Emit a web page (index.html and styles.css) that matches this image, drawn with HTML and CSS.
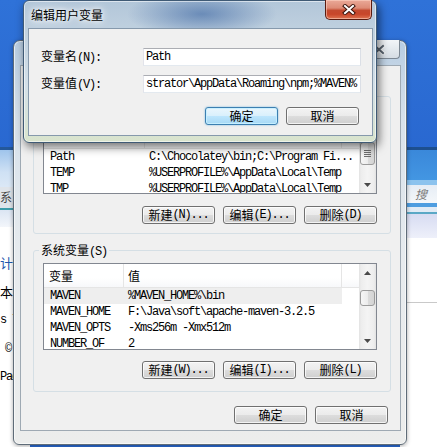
FILE: index.html
```html
<!DOCTYPE html>
<html lang="zh-CN">
<head>
<meta charset="utf-8">
<title>编辑用户变量</title>
<link rel="stylesheet" href="styles.css">
</head>
<body>
<div class="desk">
  <div class="bgwin bg-left">
    <div class="bl-line"></div>
    <div class="bl-bar"></div>
    <div class="bl-tool"><span class="z">系</span></div>
    <div class="bl-teal"></div>
    <div class="bl-lav"></div>
    <div class="bl-body">
      <div class="bl-t bl-blue"><span class="z">计</span></div>
      <div class="bl-t"><span class="z">本</span></div>
      <div class="bl-t">s 7</div>
      <div class="bl-t bl-copy">©</div>
      <div class="bl-t">Pac</div>
    </div>
  </div>

  <div class="bgwin bg-right">
    <div class="br-line"></div>
    <div class="br-bar"></div>
    <div class="br-hl"></div>
    <div class="br-search"><span class="z">搜索</span></div>
    <div class="br-blue"></div>
    <div class="br-light"></div>
    <div class="br-teal"></div>
    <div class="br-lav"></div>
    <div class="br-body"><div class="br-rule"></div></div>
  </div>

  <div class="win envwin">
    <div class="env-title">
      <div class="env-close">
        <svg width="14" height="11" viewBox="0 0 14 11"><path d="M3 2 L11 9 M11 2 L3 9" stroke="#f4f6f8" stroke-width="4" stroke-linecap="square"/><path d="M3 2 L11 9 M11 2 L3 9" stroke="#5a6470" stroke-width="2" stroke-linecap="square"/></svg>
      </div>
    </div>
    <div class="env-client">
      <fieldset class="grp grp-user">
        <legend>Administrator <span class="z">的用户变量</span>(U)</legend>
        <div class="lv lv-user">
          <div class="lv-main">
            <div class="lv-head"><div class="c1"><span class="z">变量</span></div><div class="c2"><span class="z">值</span></div><div class="c3"></div></div>
            <div class="lv-row"><div class="c1">Path</div><div class="c2">C:\Chocolatey\bin;C:\Program Fi...</div></div>
            <div class="lv-row"><div class="c1">TEMP</div><div class="c2">%USERPROFILE%\AppData\Local\Temp</div></div>
            <div class="lv-row"><div class="c1">TMP</div><div class="c2">%USERPROFILE%\AppData\Local\Temp</div></div>
          </div>
          <div class="sb">
            <div class="sb-btn"><svg width="7" height="4" viewBox="0 0 7 4"><polygon points="0,4 3.5,0 7,4" fill="#4a4a4a"/></svg></div>
            <div class="sb-thumb thumb-user"><svg width="7" height="7" viewBox="0 0 7 7"><path d="M0 0.5H7M0 2.5H7M0 4.5H7M0 6.5H7" stroke="#6e6e6e" stroke-width="1"/></svg></div>
            <div class="sb-track"></div>
            <div class="sb-btn"><svg width="7" height="4" viewBox="0 0 7 4"><polygon points="0,0 7,0 3.5,4" fill="#4a4a4a"/></svg></div>
          </div>
        </div>
        <div class="btnrow btnrow-user">
          <button class="btn"><span class="z">新建</span>(N)...</button>
          <button class="btn"><span class="z">编辑</span>(E)...</button>
          <button class="btn"><span class="z">删除</span>(D)</button>
        </div>
      </fieldset>

      <fieldset class="grp grp-sys">
        <legend><span class="z">系统变量</span>(S)</legend>
        <div class="lv lv-sys">
          <div class="lv-main">
            <div class="lv-head"><div class="c1"><span class="z">变量</span></div><div class="c2"><span class="z">值</span></div><div class="c3"></div></div>
            <div class="lv-row sel"><div class="c1">MAVEN</div><div class="c2">%MAVEN_HOME%\bin</div></div>
            <div class="lv-row"><div class="c1">MAVEN_HOME</div><div class="c2">F:\Java\soft\apache-maven-3.2.5</div></div>
            <div class="lv-row"><div class="c1">MAVEN_OPTS</div><div class="c2">-Xms256m -Xmx512m</div></div>
            <div class="lv-row"><div class="c1">NUMBER_OF</div><div class="c2">2</div></div>
          </div>
          <div class="sb">
            <div class="sb-btn"><svg width="7" height="4" viewBox="0 0 7 4"><polygon points="0,4 3.5,0 7,4" fill="#4a4a4a"/></svg></div>
            <div class="sb-gap"></div>
            <div class="sb-thumb thumb-sys"></div>
            <div class="sb-track"></div>
            <div class="sb-btn"><svg width="7" height="4" viewBox="0 0 7 4"><polygon points="0,0 7,0 3.5,4" fill="#4a4a4a"/></svg></div>
          </div>
        </div>
        <div class="btnrow btnrow-sys">
          <button class="btn"><span class="z">新建</span>(W)...</button>
          <button class="btn"><span class="z">编辑</span>(I)...</button>
          <button class="btn"><span class="z">删除</span>(L)</button>
        </div>
      </fieldset>

      <div class="okrow">
        <button class="btn"><span class="z">确定</span></button>
        <button class="btn"><span class="z">取消</span></button>
      </div>
    </div>
  </div>

  <div class="win editwin">
    <div class="edit-title">
      <span class="ttl z">编辑用户变量</span>
      <div class="close">
        <svg width="14" height="11" viewBox="0 0 14 11"><path d="M3 2 L11 9 M11 2 L3 9" stroke="#3c140c" stroke-width="4" stroke-linecap="square"/><path d="M3 2 L11 9 M11 2 L3 9" stroke="#ffffff" stroke-width="2" stroke-linecap="square"/></svg>
      </div>
    </div>
    <div class="edit-client">
      <div class="frow">
        <div class="flabel"><span class="z">变量名</span>(N):</div>
        <div class="field">Path</div>
      </div>
      <div class="frow frow2">
        <div class="flabel"><span class="z">变量值</span>(V):</div>
        <div class="field">strator\AppData\Roaming\npm;%MAVEN%</div>
      </div>
      <div class="edit-btns">
        <button class="btn def"><span class="z">确定</span></button>
        <button class="btn"><span class="z">取消</span></button>
      </div>
    </div>
  </div>
</div>
</body>
</html>
```

FILE: styles.css
```css
* { box-sizing: border-box; }
html, body { margin: 0; padding: 0; }
body {
  width: 437px;
  height: 447px;
  overflow: hidden;
  font-family: "Liberation Mono", "Noto Sans CJK SC", monospace;
  font-size: 12px;
  letter-spacing: -1.2px;
  line-height: 16px;
  color: #000;
}
.z {
  font-family: "Noto Sans CJK SC", sans-serif;
  font-size: 12px;
  letter-spacing: 0;
}
.desk {
  position: relative;
  width: 437px;
  height: 447px;
  overflow: hidden;
  background: linear-gradient(180deg, #2f72d8 0%, #2866cf 40%, #2a6ad2 100%);
}

/* background windows */
.bgwin { position: absolute; display: flex; flex-direction: column; overflow: hidden; }
.bg-left { left: 0; top: 147px; width: 30px; bottom: 0; background: #fff; }
.bl-line { height: 3px; background: #24589a; }
.bl-bar { height: 37px; background: linear-gradient(180deg, #9fc4ec 0%, #cfe1f4 60%, #dbe8f6 100%); }
.bl-tool { height: 21px; background: #dfe4ea; color: #444; line-height: 20px; }
.bl-teal { height: 2px; background: #3f9ca9; }
.bl-lav { height: 17px; background: linear-gradient(180deg, #dbe5f3, #f3f6fb); }
.bl-body { flex: 1; background: #fff; padding-top: 22px; }
.bl-t { height: 28.5px; line-height: 28.5px; white-space: nowrap; }
.bl-t .z { font-size: 13px; }
.bl-blue { color: #1f57ad; }
.bl-copy { padding-left: 5px; }

.bg-right { left: 400px; right: 0; top: 147px; bottom: 0; background: #fff; }
.br-line { height: 3px; background: #1d4f8f; }
.br-bar { height: 30px; background: linear-gradient(180deg, #3a88da, #4396e2); }
.br-hl { height: 5px; background: #8cc3ee; }
.br-search {
  height: 18px;
  background: linear-gradient(180deg, #e6edf5, #f4f7fa);
  padding-left: 15px;
  line-height: 18px;
  color: #7c7c7c;
  font-style: italic;
}
.br-blue { height: 4px; background: #4e9de0; }
.br-light { height: 5px; background: #e1ebf5; }
.br-teal { height: 2px; background: #5aa8c6; }
.br-lav { height: 24px; background: linear-gradient(180deg, #d7dcf2, #eef0fa); }
.br-body { flex: 1; background: #fff; padding-top: 64px; }
.br-rule { height: 1px; background: #c9c9c9; }

/* windows */
.win { position: absolute; display: flex; flex-direction: column; }

.envwin {
  left: 13px;
  top: 40px;
  width: 394px;
  height: 405px;
  border: 1px solid #5f6c78;
  border-radius: 7px 7px 6px 6px;
  padding: 0 6px 14px 7px;
  background: linear-gradient(180deg, #b8cde2 0%, #d8e2eb 20%, #e7ebee 55%, #ecedec 100%);
  box-shadow: inset 0 0 0 1px rgba(255, 255, 255, 0.6), 0 1px 4px rgba(0, 0, 0, 0.35);
}
.env-title {
  height: 25px;
  flex: none;
  display: flex;
  justify-content: flex-end;
  align-items: flex-start;
}
.env-close {
  width: 43px;
  height: 19px;
  margin-top: -1px;
  border: 1px solid #7d8894;
  border-top: none;
  border-radius: 0 0 4px 4px;
  background: linear-gradient(180deg, #f2f5f8, #d6dde4);
  display: flex;
  align-items: center;
  justify-content: center;
}
.env-client {
  flex: 1;
  background: #f0f0f0;
  box-shadow: 0 0 0 1px #9ea9b3;
  display: flex;
  flex-direction: column;
}

/* group boxes */
.grp {
  margin: 0 9px 0 12px;
  padding: 0 13px 9px 9px;
  border: 1px solid #d5dfe5;
  border-radius: 3px;
  min-width: 0;
}
.grp legend {
  padding: 0 2px;
  margin-left: -4px;
  height: 16px;
  line-height: 16px;
}
.grp-user { margin-top: 22px; padding-top: 20px; }
.grp-sys { margin-top: 8px; padding-top: 5px; padding-bottom: 12px; }

/* list views */
.lv {
  display: flex;
  background: #fff;
  border: 1px solid #828790;
  overflow: hidden;
}
.lv-user { height: 70px; --c1: 101px; }
.lv-sys { height: 87px; --c1: 80px; }
.lv-main { flex: 1; min-width: 0; overflow: hidden; }
.lv-head {
  display: flex;
  height: 24px;
  border-bottom: 1px solid #e5e5e5;
  background: linear-gradient(180deg, #ffffff, #ffffff 60%, #f7f8fa 100%);
}
.lv-head > div { line-height: 23px; }
.lv-head .c1 { border-right: 1px solid #e5e5e5; }
.lv-head .c2 { border-right: 1px solid #e5e5e5; }
.lv-head .c3 { flex: 1; }
.lv-row { display: flex; height: 16px; width: 298px; white-space: nowrap; }
.lv-row.sel { background: #eeeeee; }
.c1 { width: var(--c1); flex: none; padding-left: 5px; overflow: hidden; white-space: nowrap; }
.c2 { width: calc(298px - var(--c1)); flex: none; padding-left: 4px; overflow: hidden; white-space: nowrap; }
.lv-row .c1 { padding-left: 6px; }
.lv-user .lv-row { width: auto; }
.lv-user .lv-row .c2 { width: auto; flex: 1; }

/* scrollbar */
.sb {
  width: 17px;
  flex: none;
  display: flex;
  flex-direction: column;
  background: linear-gradient(90deg, #e2e2e2 0, #ededed 2px, #f4f4f4 50%, #ededed 15px, #e2e2e2 17px);
}
.sb-btn { height: 17px; flex: none; display: flex; align-items: center; justify-content: center; }
.sb-btn svg { display: block; }
.sb-track { flex: 1; }
.sb-gap { height: 9px; flex: none; }
.sb-thumb {
  flex: none;
  margin: 0 1px;
  border: 1px solid #9b9b9b;
  border-radius: 3px;
  background: linear-gradient(90deg, #f6f6f6 0%, #ececec 50%, #dcdcdc 51%, #d4d4d4 100%);
  display: flex;
  align-items: center;
  justify-content: center;
}
.thumb-user { height: 23px; }
.thumb-sys { height: 16px; }

/* buttons */
.btn {
  width: 73px;
  height: 18px;
  margin: 0;
  padding: 0;
  font: inherit;
  letter-spacing: inherit;
  color: #000;
  border: 1px solid #707070;
  border-radius: 3px;
  background: linear-gradient(180deg, #f3f3f3 0%, #ebebeb 49%, #dddddd 50%, #cfcfcf 100%);
  box-shadow: inset 0 0 0 1px rgba(255, 255, 255, 0.75);
  display: flex;
  align-items: center;
  justify-content: center;
  white-space: nowrap;
}
.btn.def {
  border-color: #3c7fb1;
  background: linear-gradient(180deg, #eaf6fd 0%, #d9f0fc 49%, #bee6fd 50%, #a7d9f5 100%);
  box-shadow: inset 0 0 0 1px rgba(200, 240, 255, 0.9), 0 0 2px rgba(60, 160, 220, 0.7);
}
.btnrow { display: flex; justify-content: flex-end; gap: 8px; }
.btnrow-user { margin-top: 12px; }
.btnrow-sys { margin-top: 11px; }
.okrow { display: flex; justify-content: flex-end; gap: 8px; margin: 14px 12px 0 0; }

/* edit dialog */
.editwin {
  left: 23px;
  top: 0;
  width: 354px;
  height: 143px;
  border: 1px solid #3f5a75;
  border-radius: 6px;
  padding: 0 4px 7px 5px;
  background:
    radial-gradient(ellipse 75px 24px at 178px 13px, rgba(55, 98, 160, 0.6), rgba(55, 98, 160, 0)),
    linear-gradient(180deg, #b2c6d9 0%, #bfd0df 28px, #d4e0e8 60%, #d9e4cd 100%);
  box-shadow: inset 0 0 0 1px rgba(255, 255, 255, 0.55), 2px 4px 10px rgba(0, 0, 0, 0.55);
}
.edit-title {
  height: 28px;
  flex: none;
  display: flex;
  align-items: center;
  justify-content: space-between;
  padding-left: 2px;
}
.ttl {
  text-shadow: 0 0 4px #fff, 0 0 8px rgba(255, 255, 255, 0.85), 0 0 12px rgba(255, 255, 255, 0.6);
}
.close {
  align-self: flex-start;
  margin-top: -1px;
  width: 47px;
  height: 20px;
  border: 1px solid #5a1c10;
  border-top: none;
  border-radius: 0 0 5px 5px;
  background: linear-gradient(180deg, #eaa998 0%, #dd8b76 42%, #c44a2f 55%, #c8462a 75%, #de7451 100%);
  box-shadow: inset 0 0 0 1px rgba(255, 215, 200, 0.55);
  display: flex;
  align-items: center;
  justify-content: center;
}
.close svg, .env-close svg { display: block; }
.edit-client {
  flex: 1;
  background: #f0f0f0;
  box-shadow: 0 0 0 1px #8699ac;
  padding: 19px 11px 0 12px;
  display: flex;
  flex-direction: column;
}
.frow { display: flex; align-items: center; height: 18px; }
.frow2 { margin-top: 9px; }
.flabel { width: 102px; flex: none; white-space: nowrap; }
.field {
  width: 218px;
  height: 18px;
  flex: none;
  background: #fff;
  border: 1px solid;
  border-color: #abadb3 #dbdfe6 #e3e9ef #e2e3ea;
  padding-left: 2px;
  line-height: 16px;
  white-space: nowrap;
  overflow: hidden;
}
.edit-btns { display: flex; justify-content: flex-end; gap: 8px; margin: 14px 2px 0 0; }
```
